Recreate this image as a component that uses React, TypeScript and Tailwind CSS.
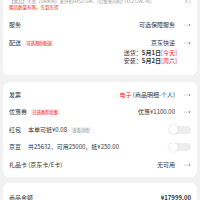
import { ReactNode } from 'react'

function Dots() {
  return (
    <svg width="8" height="4" viewBox="0 0 8 4" className="ml-[8px] shrink-0">
      <circle cx="1.5" cy="2" r="0.6" fill="#bbb" />
      <circle cx="4" cy="2" r="0.6" fill="#999" />
      <circle cx="6.5" cy="2" r="0.8" fill="#666" />
    </svg>
  )
}

function Toggle() {
  return (
    <div className="ml-auto w-[22px] h-[8px] rounded-full bg-[#ededed] flex items-center">
      <div className="w-[9px] h-[9px] rounded-full bg-white shadow-[0_0_1.5px_rgba(0,0,0,0.25)]" />
    </div>
  )
}

function Tag({ children, gray }: { children: ReactNode; gray?: boolean }) {
  return (
    <span
      className={`ml-[4px] px-[1.5px] h-[6px] leading-[6px] text-[4.2px] rounded-[1px] ${
        gray ? 'bg-[#f2f2f2] text-[#999]' : 'bg-[#fde8e8] text-[#f2270c]'
      }`}
    >
      {children}
    </span>
  )
}

function Row({ label, tag, right, h = 'h-[18px]' }: { label: ReactNode; tag?: ReactNode; right?: ReactNode; h?: string }) {
  return (
    <div className={`flex items-center ${h}`}>
      <span className="text-[#333]">{label}</span>
      {tag}
      {right && (
        <div className="ml-auto flex items-center">
          <span className="text-[#333]">{right}</span>
          <Dots />
        </div>
      )}
    </div>
  )
}

export default function App() {
  return (
    <div className="w-[200px] h-[200px] overflow-hidden bg-[#f2f2f2] font-['Noto_Sans_CJK_SC',sans-serif] text-[6px] leading-[8px]">
      {/* 商品 + 配送 */}
      <div className="mx-[3px] -mt-[2px] bg-white rounded-b-[6px] px-[6px] pb-[10px]">
        <div className="text-[4.5px] leading-[6px]">
          <div className="flex text-[#999] whitespace-nowrap">
            <span>【赠品】大金（DAIKIN）室外机RXS272AC（完整室内机FTXS272AC-W）</span>
            <span className="ml-auto">×1</span>
          </div>
          <div className="text-[#f2270c]">赠品数量有限，先到先得</div>
        </div>
        <div className="mt-[6px]">
          <Row label="服务" right="可选保障服务" />
          <Row label="配送" tag={<Tag>可选预约配送</Tag>} right="京东快递" />
          <div className="-mt-[3px] flex justify-end mr-[14px]">
            <div className="leading-[8px] text-[#333]">
              <div>
                送货：<span className="font-bold">5月1日</span>
                <span className="text-[#f2270c]">[今天]</span>
              </div>
              <div>
                安装：<span className="font-bold">5月2日</span>
                <span className="text-[#f2270c]">[周六]</span>
              </div>
            </div>
          </div>
        </div>
      </div>

      {/* 发票 / 优惠 */}
      <div className="mx-[3px] mt-[7px] bg-white rounded-[6px] px-[6px] pt-[4px] pb-[3px]">
        <Row
          h="h-[17.5px]"
          label="发票"
          right={
            <>
              <span className="text-[#f2270c]">电子</span> (商品明细-个人)
            </>
          }
        />
        <Row h="h-[17.5px]" label="优惠券" tag={<Tag>已选推荐优惠</Tag>} right="优惠¥1100.00" />
        <div className="flex items-center h-[17.5px] text-[#333]">
          <span>红包</span>
          <span className="ml-[7px]">本单可抵¥0.08</span>
          <Tag gray>查看详情</Tag>
          <Toggle />
        </div>
        <div className="flex items-center h-[17.5px] text-[#333]">
          <span>京豆</span>
          <span className="ml-[7px]">共25632，可用25000，抵¥250.00</span>
          <Toggle />
        </div>
        <Row h="h-[17.5px]" label="礼品卡 (京东卡/E卡)" right="无可用" />
      </div>

      {/* 金额 */}
      <div className="mx-[3px] mt-[6px] bg-white rounded-t-[6px] px-[6px] pt-[8px] pb-[6px]">
        <div className="flex items-center h-[14px] text-[#333]">
          <span>商品金额</span>
          <span className="ml-auto font-semibold">¥17999.00</span>
        </div>
      </div>
    </div>
  )
}
